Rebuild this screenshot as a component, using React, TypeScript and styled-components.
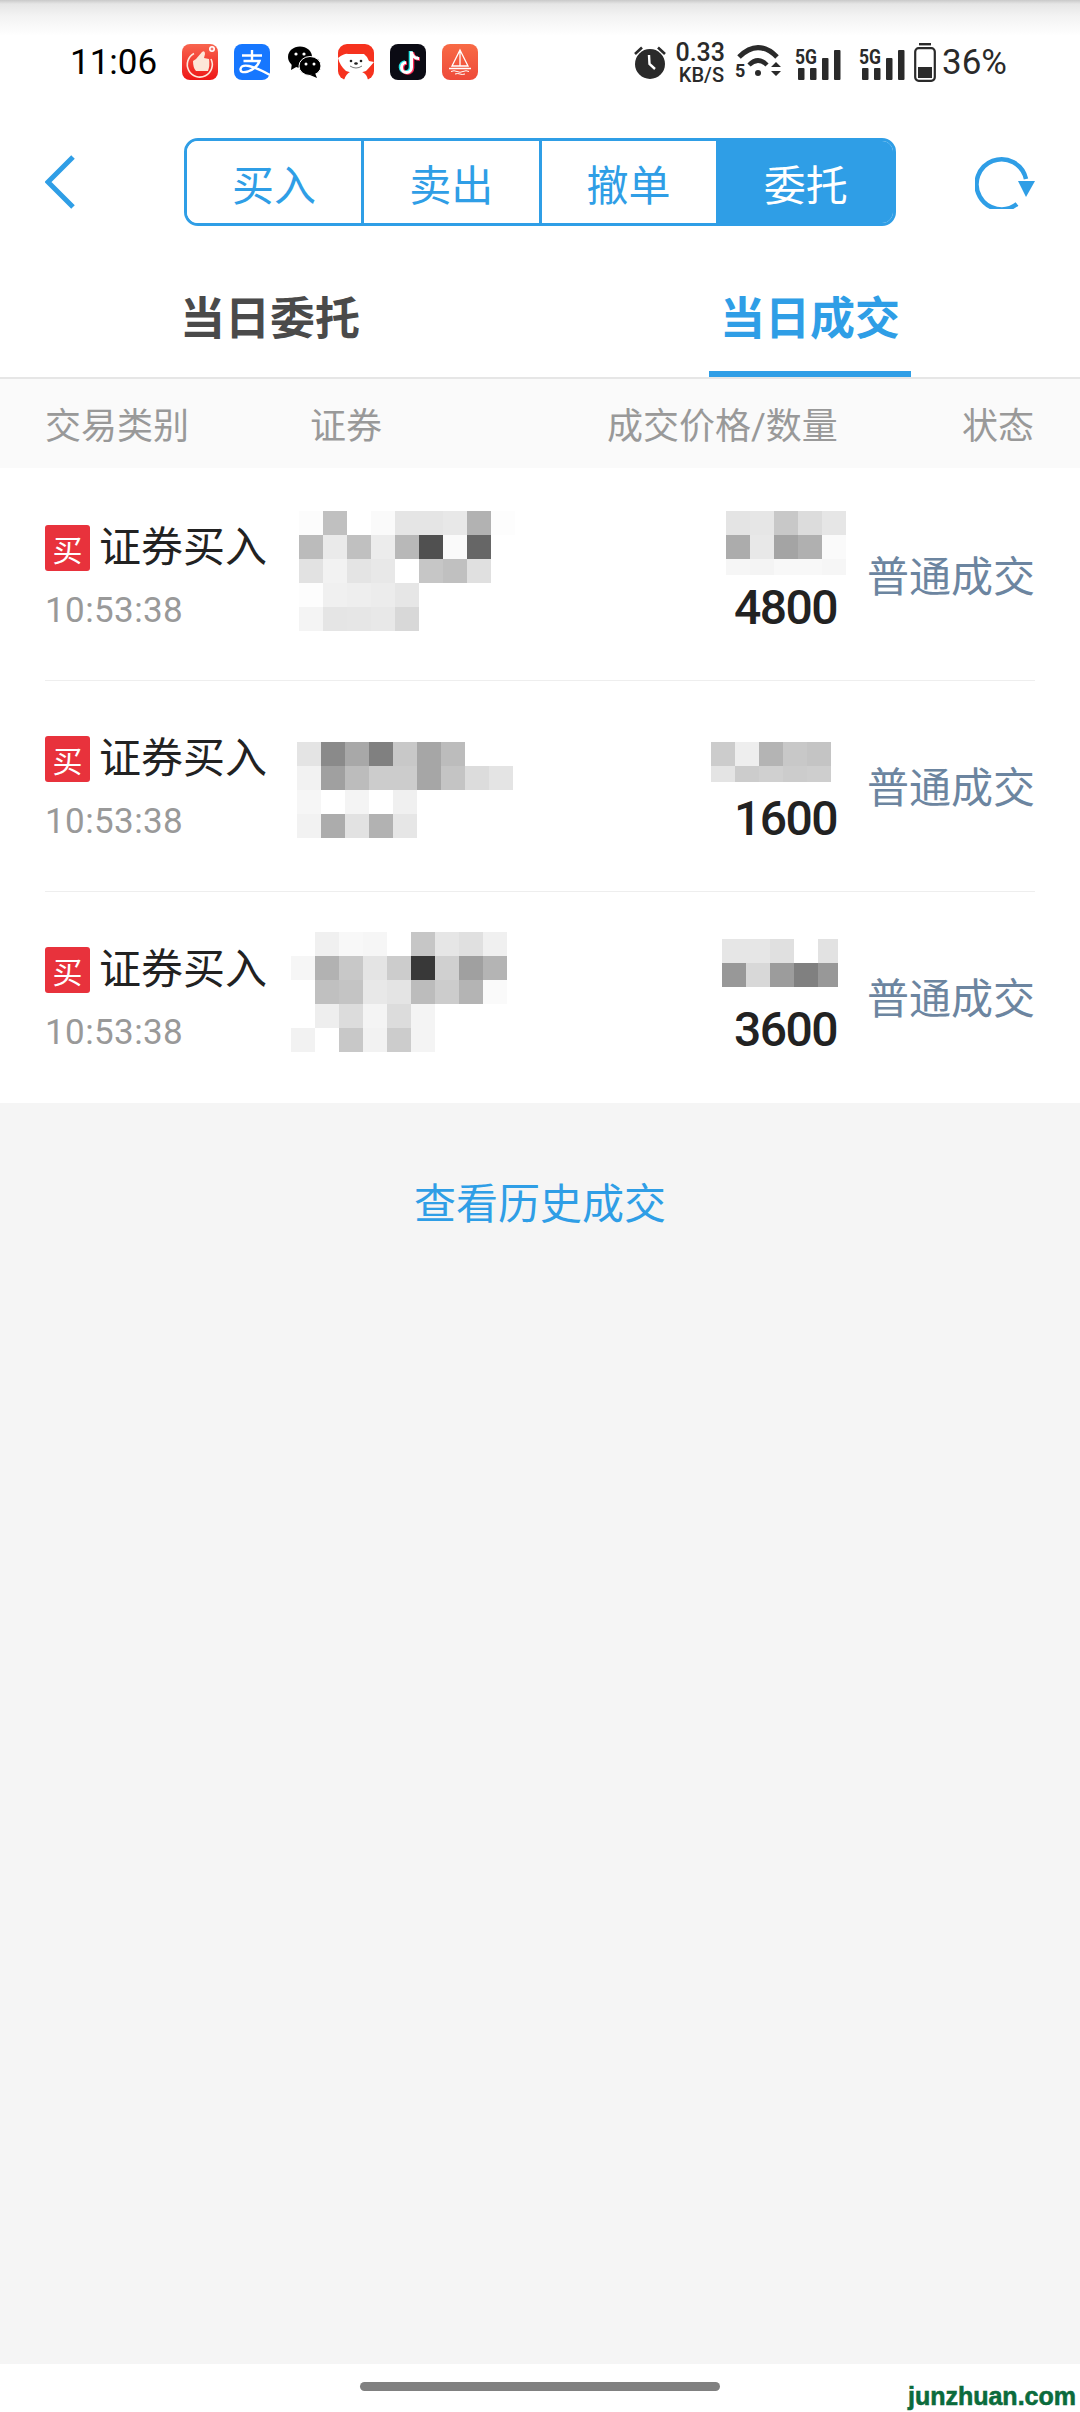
import React from 'react';
import styled, { createGlobalStyle } from 'styled-components';

const BLUE = '#2f9ee6';
const CJK = '"Roboto", "Noto Sans CJK SC", sans-serif';

const GlobalStyle = createGlobalStyle`
  html, body {
    margin: 0;
    padding: 0;
    background: #fff;
    font-family: ${CJK};
  }
`;

type Tone = number | null;

interface Trade {
  qty: string;
  nameLeft: number;
  nameTop: number;
  nameCells: Tone[][];
  priceLeft: number;
  priceTop: number;
  priceWidth: number;
  priceHeight: number;
  priceCells: Tone[][];
}

const trades: Trade[] = [
  {
    qty: '4800',
    nameLeft: 8,
    nameTop: 41,
    nameCells: [
      [0xfc, 0xc0, 0xff, 0xfa, 0xe5, 0xe5, 0xe8, 0xb2, 0xfd],
      [0xbb, 0xea, 0xc0, 0xec, 0xb8, 0x50, 0xfa, 0x66, 0xff],
      [0xe2, 0xf2, 0xe4, 0xe8, 0xff, 0xc6, 0xc0, 0xe0, 0xff],
      [0xfd, 0xf0, 0xee, 0xec, 0xe6],
      [0xf4, 0xe5, 0xe6, 0xe8, 0xd8],
    ],
    priceLeft: 35,
    priceTop: 41,
    priceWidth: 120,
    priceHeight: 64,
    priceCells: [
      [0xe4, 0xe6, 0xc8, 0xdc, 0xe6],
      [0xac, 0xe8, 0xa4, 0xb0, 0xfa],
      [0xf6, 0xf4, 0xf8, 0xf8, 0xf6],
    ],
  },
  {
    qty: '1600',
    nameLeft: 6,
    nameTop: 61,
    nameCells: [
      [0xe4, 0x8a, 0xa8, 0x80, 0xc8, 0xa6, 0xbc, 0xff, 0xff],
      [0xf2, 0xa0, 0xbc, 0xcc, 0xcc, 0xa6, 0xc4, 0xdc, 0xe4],
      [0xf6, 0xff, 0xf4, 0xff, 0xf0],
      [0xf2, 0xac, 0xe2, 0xb2, 0xe6],
    ],
    priceLeft: 20,
    priceTop: 61,
    priceWidth: 120,
    priceHeight: 40,
    priceCells: [
      [0xcc, 0xee, 0xb4, 0xc8, 0xc4],
      [0xe4, 0xcc, 0xd0, 0xcc, 0xce],
    ],
  },
  {
    qty: '3600',
    nameLeft: 0,
    nameTop: 40,
    nameCells: [
      [0xff, 0xf0, 0xf8, 0xf6, 0xff, 0xc6, 0xe6, 0xe0, 0xf0],
      [0xf6, 0xb2, 0xc8, 0xe4, 0xcc, 0x38, 0xd0, 0xa0, 0xb4],
      [0xff, 0xc0, 0xc4, 0xe8, 0xe4, 0xbc, 0xcc, 0xb4, 0xfa],
      [0xff, 0xee, 0xdc, 0xf4, 0xdc, 0xf4],
      [0xf2, 0xff, 0xc8, 0xf2, 0xcc, 0xf4],
    ],
    priceLeft: 31,
    priceTop: 47,
    priceWidth: 116,
    priceHeight: 48,
    priceCells: [
      [0xe6, 0xe6, 0xe0, 0xff, 0xe2],
      [0x98, 0xd8, 0x9c, 0x80, 0x98],
    ],
  },
];

const segments = ['买入', '卖出', '撤单', '委托'];

const AppIcons = () => (
  <>
    <IconSvg viewBox="0 0 36 36">
      <defs>
        <linearGradient id="thumbBg" x1="0" y1="0" x2="0" y2="1">
          <stop offset="0" stopColor="#f8654f" />
          <stop offset="1" stopColor="#ee1616" />
        </linearGradient>
      </defs>
      <rect width="36" height="36" rx="8" fill="url(#thumbBg)" />
      <path d="M12 9.5 A12.5 12.5 0 1 0 29 15" fill="none" stroke="#fde8dc" strokeWidth="1.6" />
      <path d="M11 17 L14 15 L20 8 Q23 6 23 10 L22 14 L27 15 Q28 22 26 27 L14 27 Q11 24 11 17 Z" fill="#fde6d8" />
      <circle cx="30" cy="5" r="3" fill="#fff" />
      <path d="M28.6 5 H31.4 M30 3.6 V6.4" stroke="#ee3a30" strokeWidth="0.9" />
    </IconSvg>
    <IconSvg viewBox="0 0 36 36">
      <rect width="36" height="36" rx="8" fill="#1677ff" />
      <path
        d="M8 11.5 H28 M18 6 V17 M9.5 17 H25.5 Q23 24 14 27.5 Q6 29.5 6.5 25 Q7.5 20.5 15 22 Q23 24 36 31"
        fill="none"
        stroke="#fff"
        strokeWidth="2.4"
      />
    </IconSvg>
    <IconSvg viewBox="0 0 36 36">
      <ellipse cx="14" cy="13" rx="12" ry="10.5" fill="#000" />
      <path d="M6 19 L5 26 L12 22 Z" fill="#000" />
      <circle cx="10" cy="10" r="1.6" fill="#fff" />
      <circle cx="18" cy="10" r="1.6" fill="#fff" />
      <ellipse cx="24" cy="22" rx="11" ry="9.5" fill="#000" stroke="#fff" strokeWidth="1" />
      <path d="M29 29 L31 34 L24 31 Z" fill="#000" />
      <circle cx="20" cy="20" r="1.5" fill="#fff" />
      <circle cx="28" cy="20" r="1.5" fill="#fff" />
    </IconSvg>
    <IconSvg viewBox="0 0 36 36">
      <rect width="36" height="36" rx="9" fill="#f6321e" />
      <path d="M0 14 Q7 9 10 10 L26 10 Q30 13 31 17 L36 18 Q31 24 28 27 Q18 31 8 27 Q2 22 0 14 Z" fill="#fff" />
      <path d="M6 36 Q8 30 12 28 H24 Q29 30 30 36 Z" fill="#fff" />
      <circle cx="13" cy="17" r="1.3" fill="#222" />
      <circle cx="23" cy="17" r="1.3" fill="#222" />
      <ellipse cx="18" cy="19.5" rx="1.8" ry="1.2" fill="#222" />
      <path d="M12 22 Q18 26 24 22" fill="none" stroke="#555" strokeWidth="0.8" />
    </IconSvg>
    <IconSvg viewBox="0 0 36 36">
      <rect width="36" height="36" rx="8" fill="#0b0b14" />
      <path d="M20.5 7 V23 A5 5 0 1 1 15 18 M20.5 8 Q22 14 28 14" fill="none" stroke="#25e5e5" strokeWidth="3.6" />
      <path d="M22.5 8 V24 A5 5 0 1 1 17 19 M22.5 9 Q24 15 30 15" fill="none" stroke="#fe2c55" strokeWidth="3.6" />
      <path d="M21.5 7.5 V23.5 A5 5 0 1 1 16 18.5 M21.5 8.5 Q23 14.5 29 14.5" fill="none" stroke="#fff" strokeWidth="3" />
    </IconSvg>
    <IconSvg viewBox="0 0 36 36">
      <defs>
        <linearGradient id="boatBg" x1="0" y1="0" x2="0" y2="1">
          <stop offset="0" stopColor="#f86a45" />
          <stop offset="1" stopColor="#ee4a3a" />
        </linearGradient>
      </defs>
      <rect width="36" height="36" rx="8" fill="url(#boatBg)" />
      <path d="M18 6 L26 22 H10 Z M18 6 V22" fill="none" stroke="#fff" strokeWidth="1.3" />
      <path d="M7 24.5 H29" stroke="#fff" strokeWidth="1.5" />
      <path d="M9 27.5 Q12 26 15 27.5 T21 27.5 T27 27.5 M13 30 Q16 29 18 30 T23 30" fill="none" stroke="#fff" strokeWidth="1" />
    </IconSvg>
  </>
);

const SignalIcon = () => (
  <SignalSvg viewBox="0 -6 47 38">
    <text
      x="1"
      y="15"
      fontFamily="Roboto, sans-serif"
      fontSize="21"
      fontWeight="700"
      fill="#2a2a2a"
      textLength="22"
      lengthAdjust="spacingAndGlyphs"
    >
      5G
    </text>
    <rect x="4" y="19" width="6.5" height="12" rx="1" fill="#2a2a2a" />
    <rect x="16" y="19" width="6.5" height="12" rx="1" fill="#2a2a2a" />
    <rect x="28" y="9" width="6.5" height="22" rx="1" fill="#2a2a2a" />
    <rect x="40" y="1" width="6.5" height="30" rx="1" fill="#2a2a2a" />
  </SignalSvg>
);

const StatusIcons = () => (
  <>
    <AlarmSvg viewBox="0 0 32 34">
      <path d="M1 9 L8 2.5 M31 9 L24 2.5" stroke="#2a2a2a" strokeWidth="2.6" />
      <circle cx="16" cy="19" r="15" fill="#2a2a2a" />
      <path d="M15 10 L15.5 19 L21 24" fill="none" stroke="#fff" strokeWidth="2.4" />
    </AlarmSvg>
    <NetSpeed>
      <NetValue>0.33</NetValue>
      <NetUnit>KB/S</NetUnit>
    </NetSpeed>
    <WifiSvg viewBox="-2 -2 48 40">
      <path d="M2 13 Q21 -6 40 13" fill="none" stroke="#2a2a2a" strokeWidth="5" />
      <path d="M12 21 Q21 12 30 21" fill="none" stroke="#2a2a2a" strokeWidth="4.5" />
      <circle cx="21" cy="29" r="3" fill="#2a2a2a" />
      <text x="-2" y="33" fontFamily="Roboto, sans-serif" fontSize="18" fontWeight="700" fill="#2a2a2a">
        5
      </text>
      <path d="M34 23 L39 18 L44 23 Z M34 27 H44 L39 32 Z" fill="#2a2a2a" />
    </WifiSvg>
    <SignalIcon />
    <SignalIcon />
    <BatterySvg viewBox="0 0 22 39">
      <rect x="5" y="0" width="12" height="2.4" fill="#2a2a2a" />
      <rect x="1.2" y="5.2" width="19.6" height="32.6" rx="3.5" fill="none" stroke="#2a2a2a" strokeWidth="2.2" />
      <rect x="4" y="24" width="14" height="11" fill="#2a2a2a" />
    </BatterySvg>
    <Percent>36%</Percent>
  </>
);

const Mosaic = ({ cells, left, top, width, height }: { cells: Tone[][]; left: number; top: number; width?: number; height?: number }) => (
  <MosaicGrid $left={left} $top={top} $width={width} $height={height}>
    {cells.map((row, r) => (
      <MosaicRow key={r}>
        {row.map((tone, c) => (
          <MosaicCell key={c} style={{ background: `rgb(${tone},${tone},${tone})` }} />
        ))}
      </MosaicRow>
    ))}
  </MosaicGrid>
);

const App: React.FC = () => (
  <Page>
    <GlobalStyle />
    <StatusBar>
      <StatusLeft>
        <Clock>11:06</Clock>
        <AppIconRow>
          <AppIcons />
        </AppIconRow>
      </StatusLeft>
      <StatusRight>
        <StatusIcons />
      </StatusRight>
    </StatusBar>

    <NavBar>
      <BackSvg viewBox="0 0 30 54">
        <path d="M28 2 L3 27 L28 52" fill="none" stroke={BLUE} strokeWidth="5" />
      </BackSvg>
      <Segmented>
        {segments.map((label, i) => (
          <Segment key={label} $active={i === segments.length - 1}>
            {label}
          </Segment>
        ))}
      </Segmented>
      <RefreshSvg viewBox="0 0 60 54">
        <path d="M42 49 A25 25 0 1 1 51 24" fill="none" stroke={BLUE} strokeWidth="4.5" />
        <path d="M43 26 H60 L51 42 Z" fill={BLUE} />
      </RefreshSvg>
    </NavBar>

    <Tabs>
      <Tab>
        <TabLabel>当日委托</TabLabel>
      </Tab>
      <Tab>
        <TabLabel $active>当日成交</TabLabel>
      </Tab>
    </Tabs>

    <TableHead>
      <HeadCell $width={265}>交易类别</HeadCell>
      <HeadCell $width={297}>证券</HeadCell>
      <HeadCell $width={355}>成交价格/数量</HeadCell>
      <HeadCell>状态</HeadCell>
    </TableHead>

    <List>
      {trades.map((t, i) => (
        <Row key={t.qty} $last={i === trades.length - 1}>
          <TypeCell>
            <TypeLine>
              <BuyBadge>买</BuyBadge>
              <TypeText>证券买入</TypeText>
            </TypeLine>
            <TimeText>10:53:38</TimeText>
          </TypeCell>
          <NameCell>
            <Mosaic cells={t.nameCells} left={t.nameLeft} top={t.nameTop} />
          </NameCell>
          <PriceCell>
            <Mosaic cells={t.priceCells} left={t.priceLeft} top={t.priceTop} width={t.priceWidth} height={t.priceHeight} />
            <Quantity>{t.qty}</Quantity>
          </PriceCell>
          <StatusCell>普通成交</StatusCell>
        </Row>
      ))}
    </List>

    <History>
      <HistoryLink>查看历史成交</HistoryLink>
    </History>

    <HomeBar>
      <HomeHandle />
      <Watermark>junzhuan.com</Watermark>
    </HomeBar>
  </Page>
);

const Page = styled.div`
  position: relative;
  display: flex;
  flex-direction: column;
  width: 1080px;
  height: 2412px;
  overflow: hidden;
  background: #fff;
`;

const StatusBar = styled.div`
  display: flex;
  justify-content: space-between;
  align-items: flex-start;
  height: 138px;
  padding: 42px 73px 0 70px;
  box-sizing: border-box;
  background: linear-gradient(#c9c9c9 0, #e6e6e6 4px, #f3f3f3 16px, #fff 36px);
`;

const StatusLeft = styled.div`
  display: flex;
  align-items: center;
  height: 40px;
`;

const Clock = styled.span`
  font-family: Roboto, sans-serif;
  font-size: 35px;
  color: #000;
  width: 112px;
`;

const AppIconRow = styled.div`
  display: flex;
  gap: 16px;
`;

const IconSvg = styled.svg`
  width: 36px;
  height: 36px;
  display: block;
`;

const StatusRight = styled.div`
  display: flex;
  align-items: center;
  gap: 11px;
  height: 40px;
`;

const AlarmSvg = styled.svg`
  width: 32px;
  height: 34px;
`;

const NetSpeed = styled.div`
  display: flex;
  flex-direction: column;
  align-items: flex-end;
  width: 48px;
  font-family: Roboto, sans-serif;
  color: #2a2a2a;
`;

const NetValue = styled.span`
  font-size: 25px;
  font-weight: 500;
  line-height: 25px;
`;

const NetUnit = styled.span`
  font-size: 20px;
  font-weight: 500;
  line-height: 20px;
  margin-right: 1px;
`;

const WifiSvg = styled.svg`
  width: 48px;
  height: 40px;
  margin-left: -1px;
`;

const SignalSvg = styled.svg`
  width: 47px;
  height: 38px;

  & + & {
    margin-left: 6px;
  }
`;

const BatterySvg = styled.svg`
  width: 22px;
  height: 39px;
  margin-left: -2px;
`;

const Percent = styled.span`
  font-family: Roboto, sans-serif;
  font-size: 35px;
  font-weight: 400;
  color: #2a2a2a;
  margin-left: -5px;
`;

const NavBar = styled.div`
  display: flex;
  align-items: center;
  height: 88px;
  padding: 0 45px;
`;

const BackSvg = styled.svg`
  width: 30px;
  height: 54px;
`;

const Segmented = styled.div`
  display: flex;
  width: 712px;
  height: 88px;
  margin-left: 109px;
  box-sizing: border-box;
  border: 3px solid ${BLUE};
  border-radius: 14px;
  overflow: hidden;
`;

const Segment = styled.div<{ $active?: boolean }>`
  flex: 1;
  display: flex;
  align-items: center;
  justify-content: center;
  font-size: 42px;
  color: ${(p) => (p.$active ? '#fff' : BLUE)};
  background: ${(p) => (p.$active ? BLUE : '#fff')};
  border-right: ${(p) => (p.$active ? 'none' : `3px solid ${BLUE}`)};
`;

const RefreshSvg = styled.svg`
  width: 60px;
  height: 54px;
  margin-left: auto;
`;

const Tabs = styled.div`
  display: flex;
  align-items: flex-end;
  height: 153px;
  box-sizing: border-box;
  border-bottom: 2px solid #e6e6e6;
`;

const Tab = styled.div`
  flex: 1;
  display: flex;
  justify-content: center;
`;

const TabLabel = styled.span<{ $active?: boolean }>`
  padding: 0 11px 24px;
  font-size: 45px;
  font-weight: 700;
  line-height: 54px;
  color: ${(p) => (p.$active ? BLUE : '#4a4a4a')};
  border-bottom: 6px solid ${(p) => (p.$active ? BLUE : 'transparent')};
`;

const TableHead = styled.div`
  display: flex;
  align-items: center;
  height: 89px;
  padding: 0 0 2px 45px;
  box-sizing: border-box;
  background: #fafafa;
`;

const HeadCell = styled.div<{ $width?: number }>`
  width: ${(p) => (p.$width ? `${p.$width}px` : 'auto')};
  font-size: 36px;
  color: #999;
`;

const List = styled.div`
  padding: 2px 45px 0;
  background: #fff;
`;

const Row = styled.div<{ $last?: boolean }>`
  display: flex;
  height: 211px;
  box-sizing: border-box;
  border-bottom: 1px solid ${(p) => (p.$last ? 'transparent' : '#eeeeee')};
`;

const TypeCell = styled.div`
  width: 246px;
  padding-top: 55px;
`;

const TypeLine = styled.div`
  display: flex;
  align-items: center;
  gap: 9px;
`;

const BuyBadge = styled.span`
  display: flex;
  align-items: center;
  justify-content: center;
  width: 45px;
  height: 46px;
  border-radius: 3px;
  background: #e8323c;
  color: #fff;
  font-size: 30px;
`;

const TypeText = styled.span`
  font-size: 42px;
  line-height: 46px;
  color: #222;
  white-space: nowrap;
`;

const TimeText = styled.div`
  margin-top: 20px;
  font-family: Roboto, sans-serif;
  font-size: 35px;
  font-weight: 400;
  line-height: 40px;
  letter-spacing: 0.4px;
  color: #999;
`;

const NameCell = styled.div`
  width: 400px;
`;

const MosaicGrid = styled.div<{ $left: number; $top: number; $width?: number; $height?: number }>`
  margin-left: ${(p) => p.$left}px;
  margin-top: ${(p) => p.$top}px;
  width: ${(p) => (p.$width ? `${p.$width}px` : 'auto')};
  height: ${(p) => (p.$height ? `${p.$height}px` : 'auto')};
  overflow: hidden;
`;

const MosaicRow = styled.div`
  display: flex;
  height: 24px;
`;

const MosaicCell = styled.div`
  flex: none;
  width: 24px;
  height: 24px;
`;

const PriceCell = styled.div`
  display: flex;
  flex-direction: column;
  width: 169px;
  box-sizing: border-box;
  padding: 0 23px 48px 0;
`;

const Quantity = styled.div`
  margin-top: auto;
  text-align: right;
  font-family: Roboto, sans-serif;
  font-size: 48px;
  font-weight: 500;
  line-height: 48px;
  letter-spacing: -1.5px;
  color: #222;
`;

const StatusCell = styled.div`
  width: 175px;
  padding-top: 83px;
  text-align: right;
  font-size: 42px;
  line-height: 50px;
  color: #6c85a0;
  white-space: nowrap;
`;

const History = styled.div`
  flex: 1;
  padding-top: 72px;
  text-align: center;
  background: #f5f5f5;
`;

const HistoryLink = styled.span`
  font-size: 42px;
  line-height: 60px;
  color: ${BLUE};
`;

const HomeBar = styled.div`
  position: relative;
  display: flex;
  justify-content: center;
  height: 48px;
  padding-top: 18px;
  box-sizing: border-box;
  background: #fff;
`;

const HomeHandle = styled.div`
  width: 360px;
  height: 9px;
  border-radius: 5px;
  background: #808080;
`;

const Watermark = styled.span`
  position: absolute;
  right: 4px;
  bottom: 2px;
  font-family: "Liberation Sans", sans-serif;
  font-size: 25px;
  font-weight: 700;
  line-height: 28px;
  color: #0b6b3c;
  -webkit-text-stroke: 0.6px #0b6b3c;
`;

export default App;
